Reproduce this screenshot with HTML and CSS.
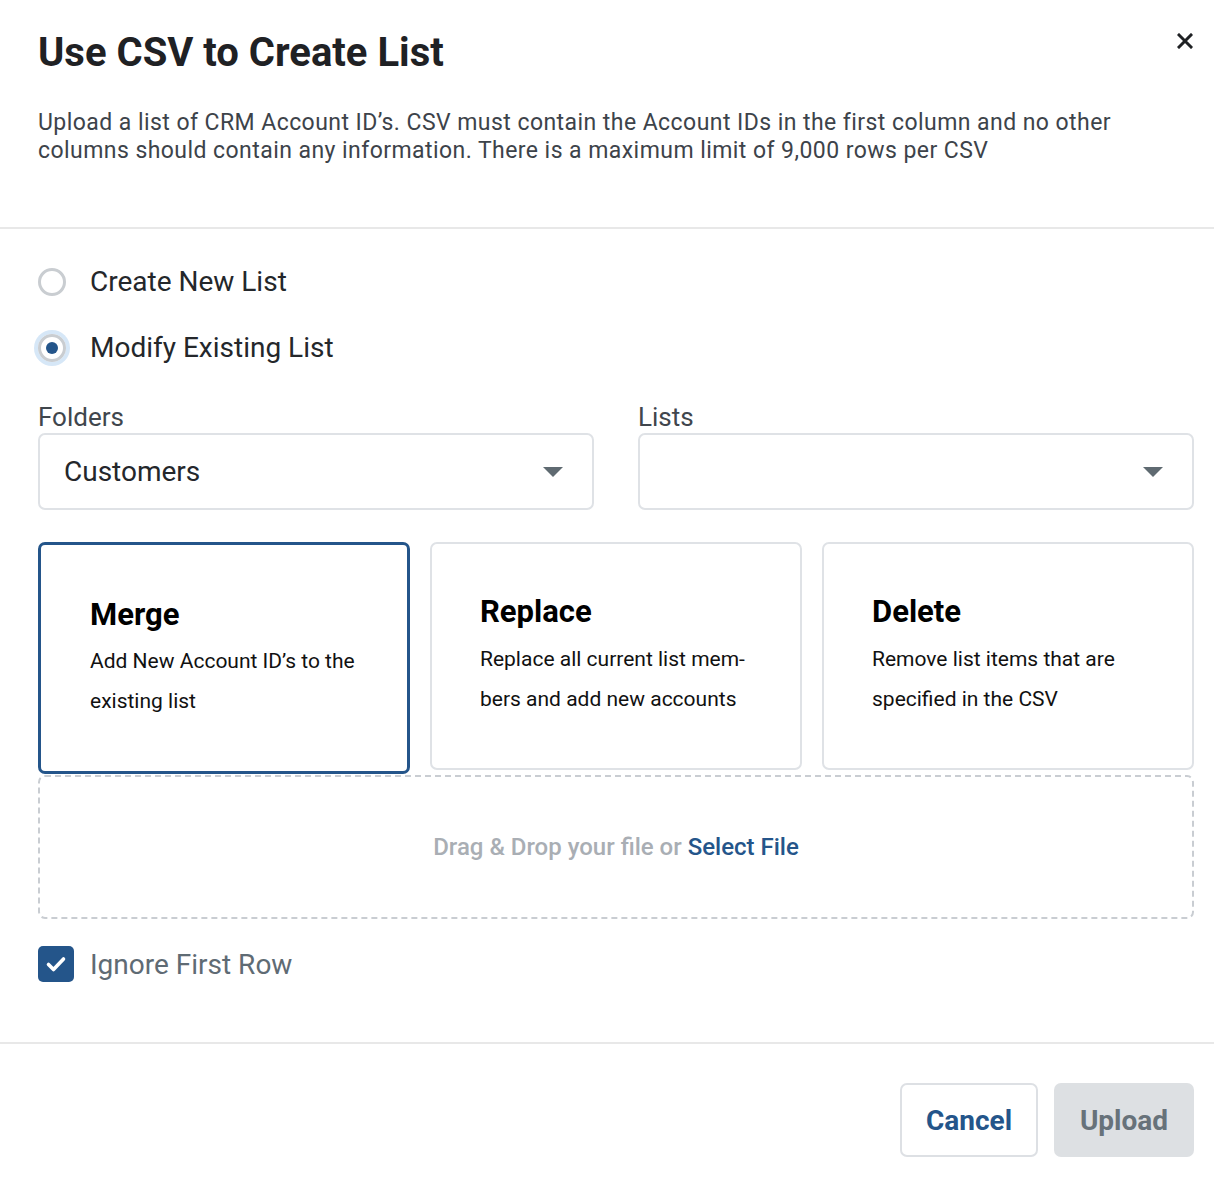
FILE: index.html
```html
<!DOCTYPE html>
<html lang="en">
<head>
<meta charset="utf-8">
<title>Use CSV to Create List</title>
<link rel="stylesheet" href="styles.css">
</head>
<body>
<div class="modal">
  <header class="modal-header">
    <div class="title-row">
      <h1 class="title">Use CSV to Create List</h1>
      <button class="close" aria-label="Close">
        <svg viewBox="0 0 16 16" width="16" height="16"><path d="M2 2 L14 14 M14 2 L2 14" stroke="#1f2124" stroke-width="3" stroke-linecap="square" fill="none"/></svg>
      </button>
    </div>
    <p class="desc">Upload a list of CRM Account ID’s. CSV must contain the Account IDs in the first column and no other columns should contain any information. There is a maximum limit of 9,000 rows per CSV</p>
  </header>

  <section class="modal-body">
    <div class="radio-group">
      <label class="radio-row"><span class="radio"></span><span class="radio-label">Create New List</span></label>
      <label class="radio-row"><span class="radio radio-checked"><span class="dot"></span></span><span class="radio-label">Modify Existing List</span></label>
    </div>

    <div class="selects">
      <div class="field">
        <div class="field-label">Folders</div>
        <div class="select"><span class="select-value">Customers</span><span class="caret"></span></div>
      </div>
      <div class="field">
        <div class="field-label">Lists</div>
        <div class="select"><span class="select-value"></span><span class="caret"></span></div>
      </div>
    </div>

    <div class="cards">
      <div class="card card-selected">
        <div class="card-title">Merge</div>
        <div class="card-text">Add New Account ID’s to the existing list</div>
      </div>
      <div class="card">
        <div class="card-title">Replace</div>
        <div class="card-text">Replace all current list mem-<br>bers and add new accounts</div>
      </div>
      <div class="card">
        <div class="card-title">Delete</div>
        <div class="card-text">Remove list items that are specified in the CSV</div>
      </div>
    </div>

    <div class="dropzone">
      <span class="drop-text">Drag &amp; Drop your file or </span><span class="drop-link">Select File</span>
    </div>

    <label class="check-row">
      <span class="checkbox">
        <svg viewBox="0 0 36 36" width="36" height="36"><path d="M10.5 18.5 L15.5 23.5 L25.5 13" stroke="#fff" stroke-width="3.6" stroke-linecap="round" stroke-linejoin="round" fill="none"/></svg>
      </span>
      <span class="check-label">Ignore First Row</span>
    </label>
  </section>

  <footer class="modal-footer">
    <button class="btn btn-cancel">Cancel</button>
    <button class="btn btn-upload">Upload</button>
  </footer>
</div>
</body>
</html>
```

FILE: styles.css
```css
* { box-sizing: border-box; }

html, body {
  margin: 0;
  padding: 0;
  background: #ffffff;
}

body {
  font-family: Roboto, "Liberation Sans", Arial, sans-serif;
  color: #24272b;
}

.modal {
  width: 1214px;
  min-height: 1178px;
}

.modal-header {
  padding: 30px 21px 62px 38px;
  border-bottom: 2px solid #e8e8e8;
}

.title-row {
  display: flex;
  justify-content: space-between;
  align-items: flex-start;
}

.title {
  margin: 0;
  font-size: 40px;
  line-height: 46px;
  font-weight: 700;
  color: #1f2124;
}

.close {
  margin-top: 3px;
  padding: 0;
  border: 0;
  background: none;
  width: 16px;
  height: 16px;
  display: block;
  cursor: pointer;
}

.close svg { display: block; }

.desc {
  margin: 33px 0 0;
  font-size: 23px;
  line-height: 28px;
  letter-spacing: 0.44px;
  color: #3d434a;
}

.modal-body {
  padding: 0 20px 0 38px;
}

.radio-group {
  padding-top: 35px;
  display: flex;
  flex-direction: column;
  gap: 30px;
}

.radio-row {
  display: flex;
  align-items: center;
  height: 36px;
  gap: 24px;
}

.radio {
  width: 28px;
  height: 28px;
  border-radius: 50%;
  border: 3px solid #c9cdd1;
  display: flex;
  align-items: center;
  justify-content: center;
  flex: none;
}

.radio-checked {
  box-shadow: 0 0 0 4px #d6e7f7;
}

.dot {
  width: 12px;
  height: 12px;
  border-radius: 50%;
  background: #24558a;
}

.radio-label {
  font-size: 28px;
  line-height: 36px;
  color: #24272b;
}

.selects {
  margin-top: 36px;
  display: grid;
  grid-template-columns: 556px 556px;
  column-gap: 44px;
}

.field-label {
  font-size: 26px;
  line-height: 31px;
  color: #40464d;
}

.select {
  height: 77px;
  border: 2px solid #dfe2e6;
  border-radius: 7px;
  display: flex;
  align-items: center;
  justify-content: space-between;
  padding: 0 29px 0 24px;
}

.select-value {
  font-size: 28px;
  color: #24272b;
}

.caret {
  width: 0;
  height: 0;
  border-left: 10px solid transparent;
  border-right: 10px solid transparent;
  border-top: 10px solid #5f6a71;
}

.cards {
  margin-top: 32px;
  display: grid;
  grid-template-columns: repeat(3, 372px);
  column-gap: 20px;
  align-items: start;
}

.card {
  border: 2px solid #dfe2e6;
  border-radius: 7px;
  padding: 50px 20px 49px 48px;
}

.card .card-text { margin-top: 9px; }

.card-selected {
  border: 3px solid #24558a;
  padding: 52px 20px 50px 49px;
}

.card-selected .card-text { margin-top: 8px; }

.card-title {
  font-size: 31px;
  line-height: 36px;
  font-weight: 700;
  color: #000;
}

.card-text {
  font-size: 21px;
  line-height: 40px;
  color: #111;
}

.dropzone {
  margin-top: 1px;
  height: 144px;
  border: 2px dashed #c9cdd2;
  border-radius: 7px;
  display: flex;
  align-items: center;
  justify-content: center;
  font-size: 24px;
  font-weight: 500;
}

.drop-text { color: #a9aeb4; white-space: pre; }
.drop-link { color: #24558a; }

.check-row {
  margin-top: 27px;
  display: flex;
  align-items: center;
  gap: 16px;
  height: 36px;
}

.checkbox {
  width: 36px;
  height: 36px;
  border-radius: 5px;
  background: #24558a;
  display: block;
  flex: none;
}

.checkbox svg { display: block; }

.check-label {
  font-size: 28px;
  color: #5f6b74;
}

.modal-footer {
  margin-top: 60px;
  border-top: 2px solid #e8e8e8;
  padding: 39px 20px 0 38px;
  display: flex;
  justify-content: flex-end;
  gap: 16px;
}

.btn {
  height: 74px;
  border-radius: 7px;
  font-family: Roboto, "Liberation Sans", Arial, sans-serif;
  font-size: 28px;
  font-weight: 700;
  cursor: pointer;
}

.btn-cancel {
  width: 138px;
  background: #fff;
  border: 2px solid #dde0e4;
  color: #24558a;
}

.btn-upload {
  width: 140px;
  background: #dde0e3;
  border: 0;
  color: #67727a;
}
```
